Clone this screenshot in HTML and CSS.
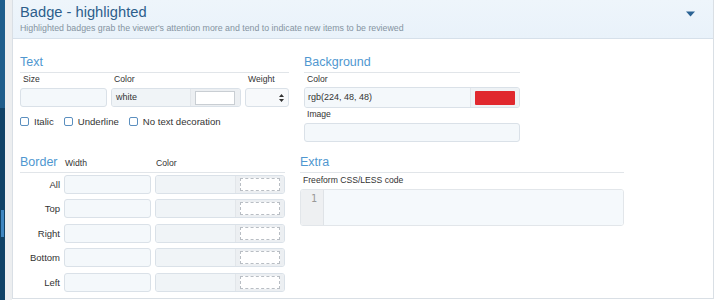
FILE: index.html
```html
<!DOCTYPE html>
<html>
<head>
<meta charset="utf-8">
<link rel="stylesheet" href="styles.css">
</head>
<body>
<div class="app">
  <div class="rail">
    <div class="rail-top"></div>
    <div class="rail-bottom"><div class="rail-hl"></div></div>
  </div>
  <div class="gap"></div>
  <div class="panel">
    <div class="head">
      <div class="head-text">
        <div class="title">Badge - highlighted</div>
        <div class="sub">Highlighted badges grab the viewer's attention more and tend to indicate new items to be reviewed</div>
      </div>
      <svg class="caret" width="9" height="6" viewBox="0 0 9 6"><path d="M0 0.5 H9 L4.5 5.5 Z" fill="#2b6394"/></svg>
    </div>
    <div class="body">
      <div class="row row1">
        <section class="sec sec-text">
          <h3 class="sec-h">Text</h3>
          <div class="fields">
            <div class="field f-size">
              <div class="lbl">Size</div>
              <div class="inp"></div>
            </div>
            <div class="field f-color">
              <div class="lbl">Color</div>
              <div class="inp grp">
                <div class="grp-main">white</div>
                <div class="grp-add"><div class="swatch sw-white"></div></div>
              </div>
            </div>
            <div class="field f-weight">
              <div class="lbl">Weight</div>
              <div class="inp sel">
                <svg width="5" height="8" viewBox="0 0 5 8"><path d="M0 3 L2.5 0 L5 3 Z M0 5 L2.5 8 L5 5 Z" fill="#333"/></svg>
              </div>
            </div>
          </div>
          <div class="checks">
            <label class="chk"><span class="box"></span>Italic</label>
            <label class="chk"><span class="box"></span>Underline</label>
            <label class="chk"><span class="box"></span>No text decoration</label>
          </div>
        </section>
        <section class="sec sec-bg">
          <h3 class="sec-h">Background</h3>
          <div class="lbl">Color</div>
          <div class="inp grp bg-color">
            <div class="grp-main">rgb(224, 48, 48)</div>
            <div class="grp-add red-add"><div class="swatch sw-red"></div></div>
          </div>
          <div class="lbl lbl-img">Image</div>
          <div class="inp bg-img"></div>
        </section>
      </div>
      <div class="row row2">
        <section class="sec sec-border">
          <div class="border-head">
            <h3 class="sec-h inline">Border</h3>
            <span class="lbl col-w">Width</span>
            <span class="lbl col-c">Color</span>
          </div>
          <div class="brow"><span class="blbl">All</span><div class="inp bw"></div><div class="inp grp bc"><div class="grp-main"></div><div class="grp-add"><div class="dash"></div></div></div></div>
          <div class="brow"><span class="blbl">Top</span><div class="inp bw"></div><div class="inp grp bc"><div class="grp-main"></div><div class="grp-add"><div class="dash"></div></div></div></div>
          <div class="brow"><span class="blbl">Right</span><div class="inp bw"></div><div class="inp grp bc"><div class="grp-main"></div><div class="grp-add"><div class="dash"></div></div></div></div>
          <div class="brow"><span class="blbl">Bottom</span><div class="inp bw"></div><div class="inp grp bc"><div class="grp-main"></div><div class="grp-add"><div class="dash"></div></div></div></div>
          <div class="brow"><span class="blbl">Left</span><div class="inp bw"></div><div class="inp grp bc"><div class="grp-main"></div><div class="grp-add"><div class="dash"></div></div></div></div>
        </section>
        <section class="sec sec-extra">
          <h3 class="sec-h">Extra</h3>
          <div class="lbl">Freeform CSS/LESS code</div>
          <div class="code">
            <div class="gutter">1</div>
            <div class="code-main"></div>
          </div>
        </section>
      </div>
    </div>
  </div>
</div>
</body>
</html>
```

FILE: styles.css
```css
* { box-sizing: border-box; }
html, body { margin: 0; padding: 0; background: #fff; }
body { font-family: "Liberation Sans", Arial, sans-serif; color: #333; width: 716px; height: 300px; overflow: hidden; }

.app { display: flex; height: 300px; }

.rail { width: 5px; display: flex; flex-direction: column; }
.rail-top { height: 108px; background: #1f5d8b; }
.rail-bottom { flex: 1; background: #0f4166; padding-top: 102px; }
.rail-hl { width: 3px; height: 27px; margin-left: 1px; background: #3f86c0; }

.gap { width: 7px; background: #eceef0; }

.panel { flex: 1; margin-right: 2px; border-left: 1px solid #d9dfe5; border-right: 1px solid #d9dfe5; border-bottom: 1px solid #d9dfe5; height: 299px; display: flex; flex-direction: column; }

.head { height: 39px; border-bottom: 1px solid #d6e0ea; background: linear-gradient(to bottom, #eef5fb, #e9f2fa); display: flex; justify-content: space-between; padding: 4px 0 0 7px; }
.title { font-size: 14.7px; line-height: 17px; color: #2d5e8b; }
.sub { font-size: 8.8px; line-height: 11px; color: #8593a1; margin-top: 2px; }
.caret { margin: 7px 18px 0 0; }

.body { padding: 16px 0 0 7px; }
.row { display: flex; }
.row1 { height: 100px; }
.sec-text { width: 269px; }
.sec-bg { width: 216px; margin-left: 15px; }
.sec-border { width: 265px; }
.sec-extra { width: 324px; margin-left: 15px; }

.sec-h { margin: 0; font-weight: normal; font-size: 12.5px; line-height: 15px; color: #4f97d0; padding-bottom: 2px; border-bottom: 1px solid #e1e5e9; }
.sec-h.inline { border-bottom: none; padding-bottom: 0; width: 45px; }

.lbl { font-size: 8.6px; line-height: 11px; color: #333; padding-left: 3px; }

.inp { height: 19px; border: 1px solid #dae1e8; border-radius: 3px; background: #f4f8fb; }

.fields { display: flex; margin-top: 1px; }
.f-size { width: 87px; }
.f-color { width: 130px; margin-left: 4px; }
.f-weight { width: 44px; margin-left: 4px; }
.field .inp { margin-top: 3px; }

.grp { display: flex; overflow: hidden; }
.grp-main { flex: 1; background: #f0f4f7; font-size: 9px; line-height: 17px; padding-left: 4px; color: #333; }
.grp-add { background: #eceff2; border-left: 1px solid #e2e6ea; display: flex; align-items: center; padding-left: 4px; }
.f-color .grp-add { width: 50px; }
.swatch { height: 14px; }
.sw-white { width: 40px; background: #fff; border: 1px solid #c9ced3; }

.sel { display: flex; align-items: center; justify-content: flex-end; padding-right: 4px; background: #f7f9fb; }

.checks { display: flex; margin-top: 9px; font-size: 9.6px; line-height: 11px; }
.chk { display: flex; align-items: center; margin-right: 10px; }
.chk .box { width: 9px; height: 9px; border: 1px solid #5b8fbf; border-radius: 2px; margin-right: 5px; background: #fff; }

.sec-bg .lbl { margin-top: 1px; }
.bg-color { margin-top: 2px; height: 21px; }
.bg-color .grp-main { background: #f4f8fb; line-height: 19px; padding-left: 3px; }
.red-add { width: 49px; background: #eef2f5; padding-left: 4px; }
.sw-red { width: 40px; height: 14px; background: #e0282e; border-radius: 1px; }
.lbl-img { margin-top: 3px; }
.bg-img { margin-top: 3px; height: 19px; }

.border-head { display: flex; align-items: flex-end; border-bottom: 1px solid #e1e5e9; padding-bottom: 2px; }
.col-w { width: 91px; padding-left: 0; margin-bottom: 1px; }
.col-c { padding-left: 0; margin-bottom: 1px; }

.brow { display: flex; align-items: center; margin-top: 5.4px; }
.border-head + .brow { margin-top: 2px; }
.blbl { width: 40px; text-align: right; font-size: 9.5px; color: #333; }
.bw { width: 87px; margin-left: 4px; }
.bc { width: 130px; margin-left: 4px; }
.bc .grp-add { width: 49px; }
.dash { width: 40px; height: 13px; border: 1px dashed #b9bec4; background: #fff; }

.sec-extra .lbl { margin-top: 2px; }
.code { display: flex; height: 37px; margin-top: 3px; border: 1px solid #e2e6ea; border-radius: 3px; overflow: hidden; }
.gutter { width: 23px; background: #eef0f2; border-right: 1px solid #dfe3e7; font-family: "DejaVu Sans Mono", monospace; font-size: 10px; color: #999; text-align: right; padding: 3px 6px 0 0; line-height: 12px; }
.code-main { flex: 1; background: #f5f9fc; }
```
